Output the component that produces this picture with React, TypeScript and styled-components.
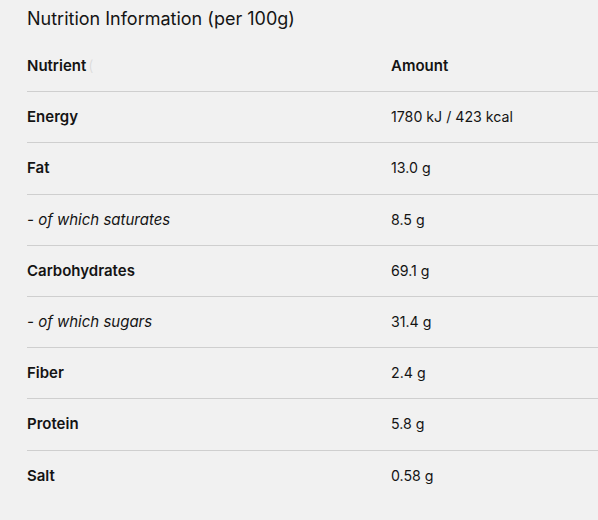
import React from "react"
import styled, { createGlobalStyle } from "styled-components"

const GlobalStyle = createGlobalStyle`
  html, body {
    margin: 0;
    padding: 0;
    background: #f1f1f1;
  }
  body {
    font-family: Inter, "Noto Sans", sans-serif;
    color: #141414;
  }
`

interface Nutrient {
  name: string
  amount: string
  sub?: boolean
}

const nutrients: Nutrient[] = [
  { name: "Energy", amount: "1780 kJ / 423 kcal" },
  { name: "Fat", amount: "13.0 g" },
  { name: "- of which saturates", amount: "8.5 g", sub: true },
  { name: "Carbohydrates", amount: "69.1 g" },
  { name: "- of which sugars", amount: "31.4 g", sub: true },
  { name: "Fiber", amount: "2.4 g" },
  { name: "Protein", amount: "5.8 g" },
  { name: "Salt", amount: "0.58 g" },
]

const Page = styled.div`
  padding: 8px 0 0 27px;
  height: 512px;
  overflow: hidden;
`

const Title = styled.h2`
  margin: 0;
  font-size: 18px;
  font-weight: 400;
  line-height: 22px;
  color: #141414;
`

const Table = styled.div`
  margin-top: 11px;
  display: flex;
  flex-direction: column;
`

const Row = styled.div<{ $last?: boolean }>`
  display: grid;
  grid-template-columns: 364px 1fr;
  height: 51.2px;
  padding-bottom: 1px;
  align-items: center;
  border-bottom: ${props => (props.$last ? "none" : "1px solid #cfcfcf")};
  box-sizing: border-box;
`

const Head = styled.div`
  font-size: 15px;
  font-weight: 600;
`

const Ghost = styled.span`
  font-weight: 300;
  color: #dcdcdc;
  margin-left: 2px;
`

const Name = styled.div<{ $sub?: boolean }>`
  font-size: 15px;
  font-weight: ${props => (props.$sub ? 400 : 600)};
  font-style: ${props => (props.$sub ? "italic" : "normal")};
`

const Amount = styled.div`
  font-size: 14.2px;
  font-weight: 400;
`

export default function App() {
  return (
    <>
      <GlobalStyle />
      <Page>
        <Title>Nutrition Information (per 100g)</Title>
        <Table>
          <Row>
            <Head>
              Nutrient<Ghost>(</Ghost>
            </Head>
            <Head>Amount</Head>
          </Row>
          {nutrients.map((n, i) => (
            <Row key={n.name} $last={i === nutrients.length - 1}>
              <Name $sub={n.sub}>{n.name}</Name>
              <Amount>{n.amount}</Amount>
            </Row>
          ))}
        </Table>
      </Page>
    </>
  )
}
